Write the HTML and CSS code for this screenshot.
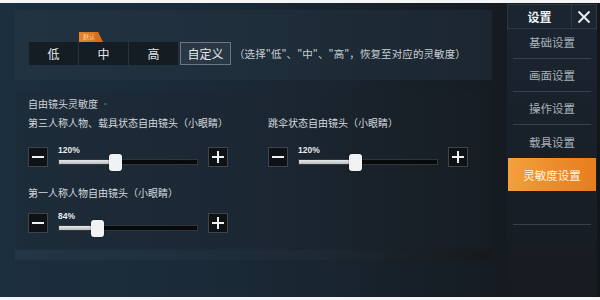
FILE: index.html
```html
<!DOCTYPE html>
<html lang="zh">
<head>
<meta charset="utf-8">
<link rel="stylesheet" href="styles.css">
</head>
<body>
<div class="strip-top"></div>
<div class="app">
  <div class="main">
    <div class="preset-panel">
      <div class="preset-row">
        <div class="seg">
          <div class="seg-btn">低</div>
          <div class="seg-btn has-badge">中<span class="badge">默认</span></div>
          <div class="seg-btn">高</div>
          <div class="seg-btn active">自定义</div>
        </div>
        <div class="hint">（选择"低"、"中"、"高"，恢复至对应的灵敏度）</div>
      </div>
    </div>
    <div class="sens-panel">
      <div class="heading">自由镜头灵敏度 <span class="dot">·</span></div>
      <div class="grid">
        <div class="item">
          <div class="label">第三人称人物、载具状态自由镜头（小眼睛）</div>
          <div class="ctrl">
            <div class="step minus"><span class="h"></span></div>
            <div class="slider">
              <div class="pct">120%</div>
              <div class="track"><div class="fill" style="width:41%"></div><div class="thumb" style="left:36%"></div></div>
            </div>
            <div class="step plus"><span class="h"></span><span class="v"></span></div>
          </div>
        </div>
        <div class="item">
          <div class="label">跳伞状态自由镜头（小眼睛）</div>
          <div class="ctrl">
            <div class="step minus"><span class="h"></span></div>
            <div class="slider">
              <div class="pct">120%</div>
              <div class="track"><div class="fill" style="width:41%"></div><div class="thumb" style="left:36%"></div></div>
            </div>
            <div class="step plus"><span class="h"></span><span class="v"></span></div>
          </div>
        </div>
        <div class="item">
          <div class="label">第一人称人物自由镜头（小眼睛）</div>
          <div class="ctrl second">
            <div class="step minus"><span class="h"></span></div>
            <div class="slider">
              <div class="pct">84%</div>
              <div class="track"><div class="fill" style="width:27%"></div><div class="thumb" style="left:23%"></div></div>
            </div>
            <div class="step plus"><span class="h"></span><span class="v"></span></div>
          </div>
        </div>
      </div>
    </div>
    <div class="bottom-band"></div>
  </div>
  <div class="side">
    <div class="side-head">
      <div class="side-title">设置</div>
      <div class="side-close">
        <svg width="14" height="14" viewBox="0 0 14 14"><path d="M1.5 1.5 L12.5 12.5 M12.5 1.5 L1.5 12.5" stroke="#e8ecef" stroke-width="2" fill="none"/></svg>
      </div>
    </div>
    <div class="menu">
      <div class="menu-item">基础设置</div>
      <div class="menu-item">画面设置</div>
      <div class="menu-item">操作设置</div>
      <div class="menu-item no-line">载具设置</div>
      <div class="menu-item active">灵敏度设置</div>
      <div class="menu-item blank"></div>
    </div>
  </div>
</div>
<div class="strip-bottom"></div>
</body>
</html>
```
FILE: styles.css
```css
* { box-sizing: border-box; }
html, body { margin: 0; padding: 0; }
body {
  width: 600px;
  height: 300px;
  overflow: hidden;
  background: #ffffff;
  font-family: "Noto Sans CJK SC", "Noto Sans", sans-serif;
  color: #d6dbe0;
}
.strip-top { height: 3px; background: #f4f5f6; }
.strip-bottom { height: 3px; background: #f4f5f6; }
.app {
  height: 294px;
  display: flex;
  background: linear-gradient(90deg, #1c2f3f 0%, #1a2936 40%, #161e26 75%, #131517 100%);
}
.main {
  width: 492px;
  padding-left: 15px;
  display: flex;
  flex-direction: column;
}
.preset-panel {
  margin-top: 7px;
  height: 70px;
  background: linear-gradient(90deg, #213241 0%, #1f2e3b 50%, #1b2630 100%);
  padding: 32px 0 0 14px;
}
.preset-row { display: flex; align-items: center; }
.seg { display: flex; height: 23px; }
.seg-btn {
  position: relative;
  width: 50px;
  height: 23px;
  display: flex;
  align-items: center;
  justify-content: center;
  font-size: 12px;
  color: #e4e8eb;
  background: #141c24;
  border-right: 1px solid #26323d;
}
.seg-btn.active {
  width: 51px;
  margin-left: 1px;
  background: #2a3744;
  border: 1px solid #6d7780;
}
.badge {
  position: absolute;
  left: 0;
  top: -10px;
  width: 24px;
  height: 10px;
  background: linear-gradient(90deg, #e7832a, #d06a1c);
  clip-path: polygon(0 0, 80% 0, 100% 100%, 0 100%);
  font-size: 6px;
  line-height: 10px;
  color: #f6d8b0;
  padding-left: 4px;
}
.hint {
  margin-left: 3px;
  font-size: 10.5px;
  color: #c9cfd4;
  white-space: nowrap;
  letter-spacing: 0.1px;
}
.sens-panel {
  margin-top: 10px;
  height: 158px;
  background: linear-gradient(90deg, #1d2c39 0%, #1b2733 50%, #171d23 100%);
  padding: 6px 0 0 13px;
}
.heading {
  font-size: 10px;
  color: #cdd3d8;
  height: 16px;
  line-height: 16px;
}
.heading .dot { color: #56636e; }
.grid {
  display: grid;
  grid-template-columns: 240px 240px;
  row-gap: 15px;
}
.label {
  margin-top: 4px;
  font-size: 10px;
  color: #d4d9de;
  height: 14px;
  line-height: 14px;
}
.ctrl {
  margin-top: 16px;
  display: flex;
  align-items: flex-start;
  gap: 10px;
}
.ctrl.second { margin-top: 12px; }
.step {
  position: relative;
  width: 20px;
  height: 20px;
  background: #0f1215;
  border: 1px solid #3c444c;
  margin-top: 1px;
}
.step .h {
  position: absolute;
  left: 3px;
  right: 3px;
  top: 8px;
  height: 2px;
  background: #eef0f2;
}
.step .v {
  position: absolute;
  top: 3px;
  bottom: 3px;
  left: 8px;
  width: 2px;
  background: #eef0f2;
}
.slider { width: 140px; }
.pct {
  font-size: 8.5px;
  color: #e6eaed;
  height: 9px;
  line-height: 9px;
  font-family: "Liberation Sans", sans-serif;
  font-weight: bold;
}
.track {
  position: relative;
  margin-top: 4px;
  height: 6px;
  background: #07090b;
  border: 1px solid #30363c;
}
.fill {
  height: 100%;
  background: linear-gradient(180deg, #e6e8ea, #b9bdc1);
}
.thumb {
  position: absolute;
  top: -6px;
  width: 13px;
  height: 17px;
  background: #f1f2f3;
  border-radius: 3px;
  box-shadow: 0 0 2px rgba(0,0,0,0.5);
}
.bottom-band {
  margin-top: 2px;
  height: 10px;
  background: linear-gradient(90deg, #233646, #1d2a35 60%, #17191b);
}
.side {
  margin-left: 15px;
  width: 90px;
  display: flex;
  flex-direction: column;
  padding-top: 1px;
}
.side-head { display: flex; height: 25px; position: relative; z-index: 1; }
.side-title {
  width: 65px;
  display: flex;
  align-items: center;
  justify-content: center;
  font-size: 12px;
  font-weight: bold;
  color: #eef1f3;
  background: #1a2530;
  border: 1px solid #2e3944;
}
.side-close {
  width: 25px;
  display: flex;
  align-items: center;
  justify-content: center;
  background: #1a2530;
  border: 1px solid #2e3944;
  border-left: none;
}
.menu {
  flex: 1;
  display: flex;
  flex-direction: column;
  margin-top: -3px;
  background: linear-gradient(180deg, #1a2430, #161b20);
}
.menu-item {
  height: 33px;
  margin: 0 6px;
  display: flex;
  align-items: center;
  justify-content: center;
  font-size: 11.5px;
  color: #a8b0b7;
  border-bottom: 1px solid #36414c;
}
.menu-item.no-line { border-bottom: none; }
.menu-item.active {
  margin: 0 1px;
  height: 33px;
  color: #fff6ea;
  background: linear-gradient(100deg, #f2a33e 0%, #ec8d2a 50%, #e77c1e 100%);
  border-bottom: none;
}
.menu-item.blank { height: 34px; }
```
